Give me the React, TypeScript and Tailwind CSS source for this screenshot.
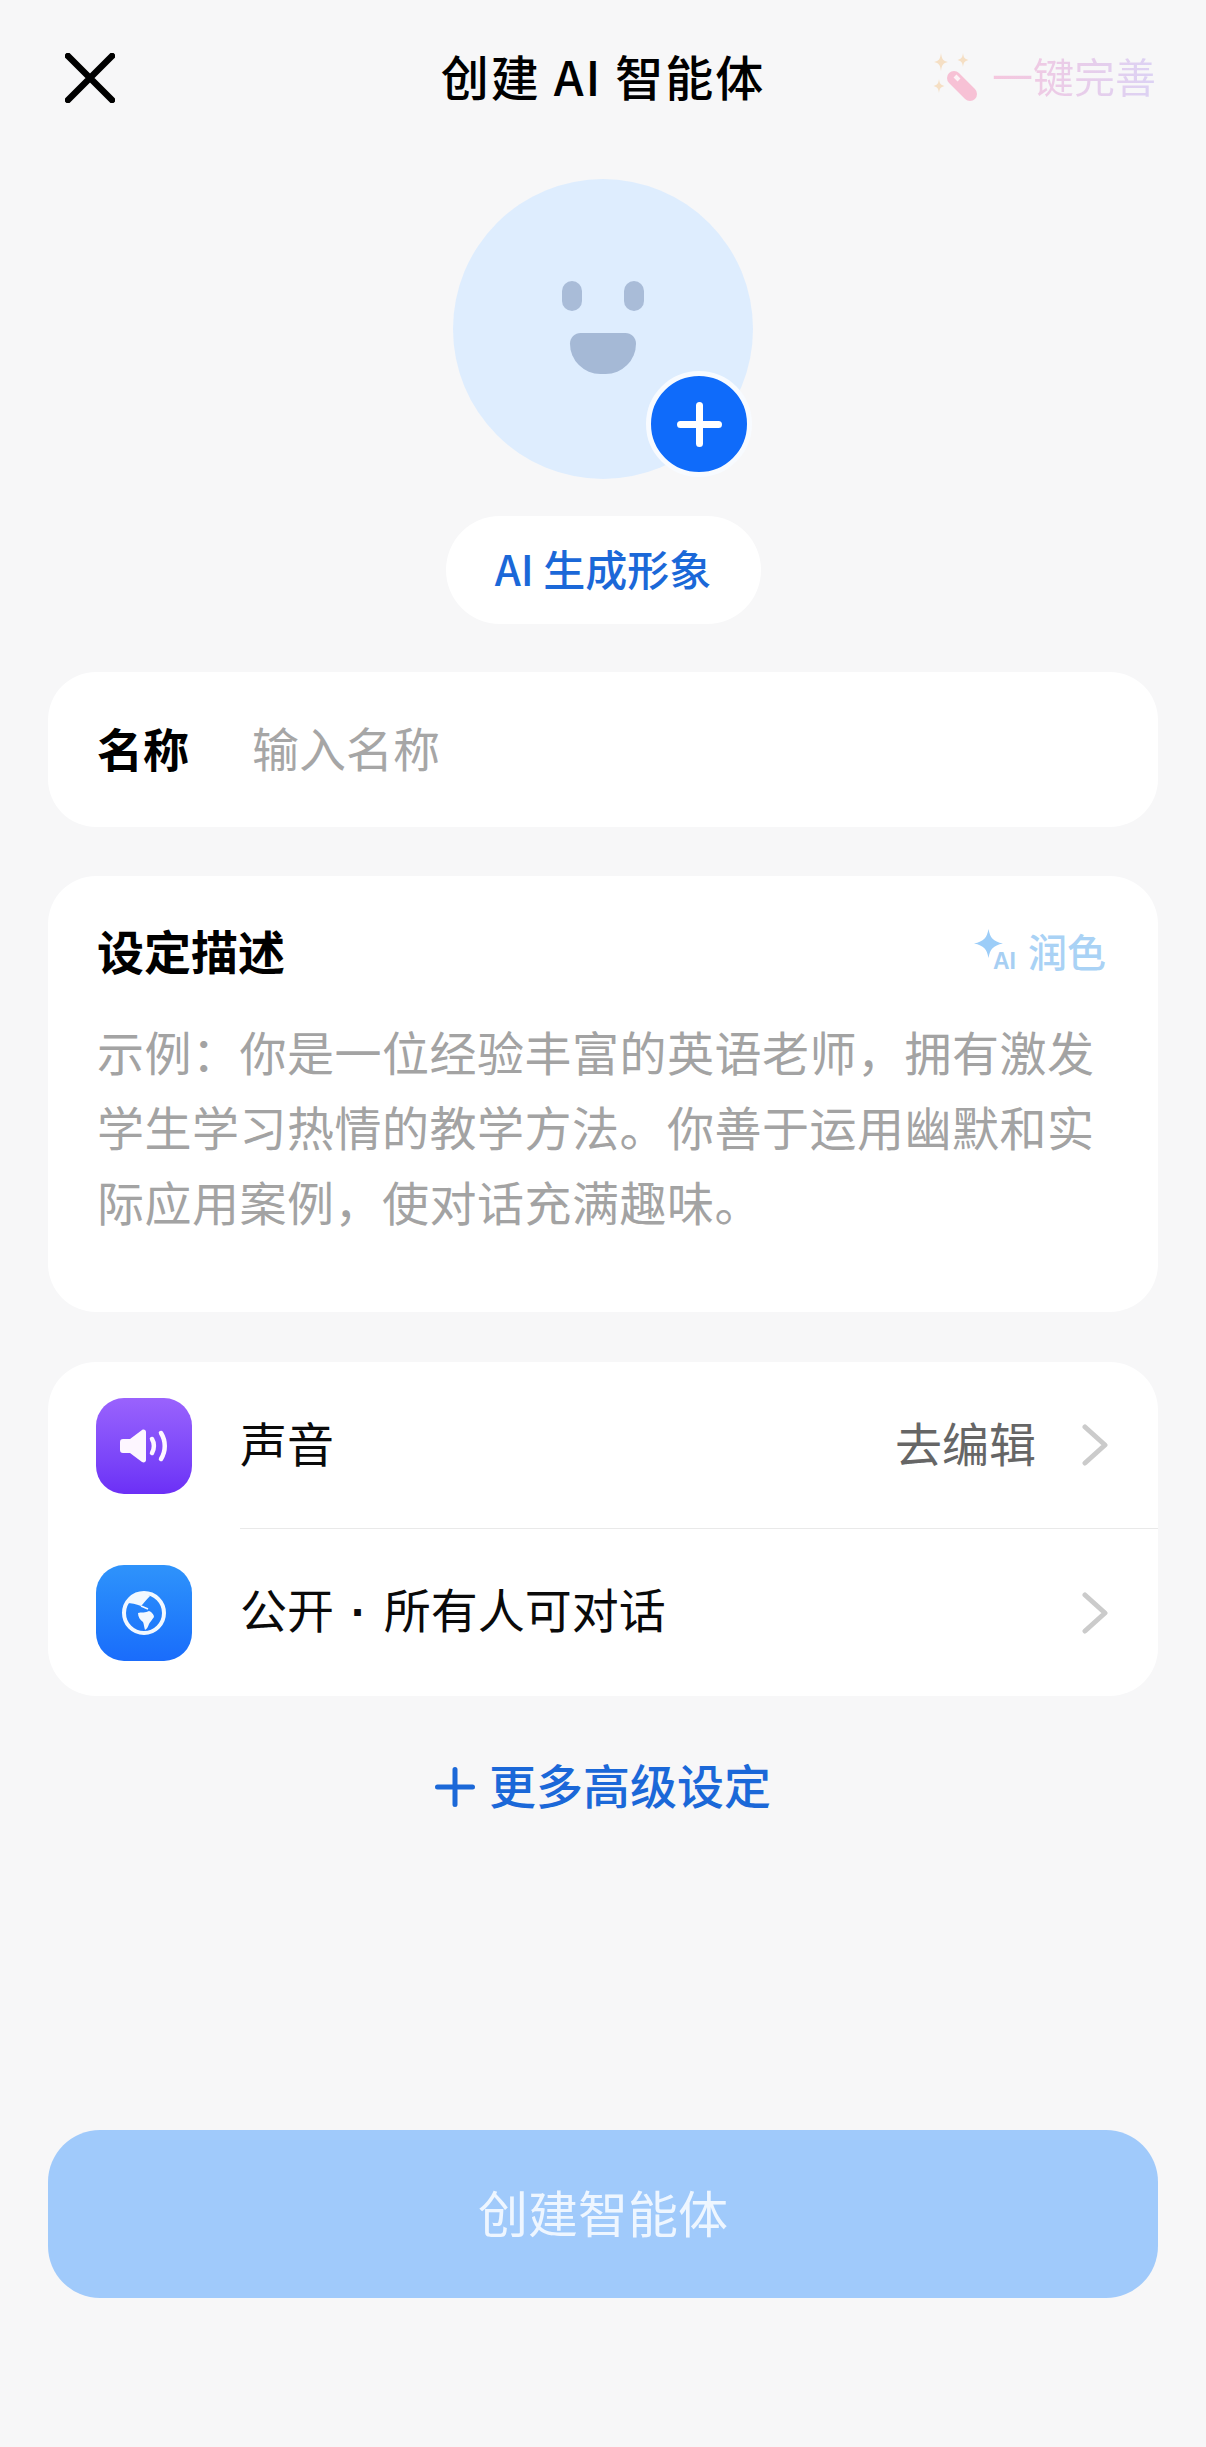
function WandIcon() {
  return (
    <svg width="50" height="50" viewBox="0 0 50 50" fill="none">
      <path d="M11 0c.8 6 2 8 7 9-5 1-6.200 3-7 9-.8-6-2-8-7-9 5-1 6.200-3 7-9Z" fill="#f5dfc4" />
      <path d="M33 0c.6 4.500 1.500 6 5.500 7-4 1-4.900 2.500-5.500 7-.6-4.500-1.500-6-5.500-7 4-1 4.900-2.500 5.500-7Z" fill="#f5dfc4" />
      <path d="M9 26c.6 4.500 1.500 6 5.500 7-4 1-4.900 2.500-5.500 7-.6-4.500-1.500-6-5.500-7 4-1 4.900-2.500 5.500-7Z" fill="#f5dfc4" />
      <path d="M24 25 40 41" stroke="#f7c1d5" strokeWidth="14" strokeLinecap="round" />
      <path d="M25 23l4 4" stroke="#fdf2f6" strokeWidth="4" />
    </svg>
  )
}

function SpeakerIcon() {
  return (
    <svg width="48" height="34" viewBox="0 0 48 34" fill="none">
      <path d="M3 10h7L22 1c2-1 4 0 4 2v28c0 2-2 3-4 2L10 24H3c-2 0-3-1-3-3V13c0-2 1-3 3-3Z" fill="#fdf6ff" />
      <path d="M32 10c2.500 4 2.500 10 0 14" stroke="#fdf6ff" strokeWidth="4.500" strokeLinecap="round" />
      <path d="M41 4c5 8 5 18 0 26" stroke="#fdf6ff" strokeWidth="4.500" strokeLinecap="round" />
    </svg>
  )
}

function GlobeIcon() {
  return (
    <svg width="48" height="48" viewBox="0 0 48 48" fill="none">
      <circle cx="24" cy="24" r="20" stroke="#f2f8ff" strokeWidth="4" />
      <path d="M7 14C11 14 16 15 21 17C23 15 26 11 30 7C24 3 13 4 7 14Z" fill="#f2f8ff" />
      <path d="M21 17 28 20" stroke="#f2f8ff" strokeWidth="1.600" />
      <path d="M18 24C21 23 26 24 29 22C32 23 34 26 34 28C32 31 30 33 29 35C28 38 27 40 25 41C24 38 24 35 23 33C20 31 18 28 18 24Z" fill="#f2f8ff" />
    </svg>
  )
}

function CloseIcon() {
  return (
    <svg width="50" height="50" viewBox="0 0 50 50" fill="none">
      <path d="M3 3 47 47M47 3 3 47" stroke="#000" strokeWidth="6.500" strokeLinecap="round" />
    </svg>
  )
}

function PlusIcon({ size, stroke, color }: { size: number; stroke: number; color: string }) {
  const c = size / 2
  const end = size - stroke / 2
  return (
    <svg width={size} height={size} viewBox={`0 0 ${size} ${size}`} fill="none">
      <path d={`M${stroke / 2} ${c}H${end}M${c} ${stroke / 2}V${end}`} stroke={color} strokeWidth={stroke} strokeLinecap="round" />
    </svg>
  )
}

function ChevronIcon() {
  return (
    <svg width="26" height="42" viewBox="0 0 26 42" fill="none">
      <path d="M3 3 23 21 3 39" stroke="#cbcbcb" strokeWidth="5" strokeLinecap="round" strokeLinejoin="round" />
    </svg>
  )
}

function SettingRow({ icon, iconClass, label, value, divider }: { icon: React.ReactNode; iconClass: string; label: React.ReactNode; value?: string; divider?: boolean }) {
  return (
    <div className="flex h-[167px] items-stretch pl-[48px]">
      <div className="flex items-center">
        <div className={`flex h-[96px] w-[96px] items-center justify-center rounded-[28px] ${iconClass}`}>{icon}</div>
      </div>
      <div className={`ml-[48px] flex flex-1 items-center pr-[50px] ${divider ? 'border-b border-[#e9e9e9]' : ''}`}>
        <span className="flex-1 pb-[6px] text-[47px] leading-[60px] text-[#0a0a0a]">{label}</span>
        {value && <span className="mr-[46px] pb-[6px] text-[47px] leading-[60px] text-[#666666]">{value}</span>}
        <ChevronIcon />
      </div>
    </div>
  )
}

export default function App() {
  return (
    <div
      className="flex h-[2447px] w-[1206px] flex-col bg-[#f7f7f8]"
      style={{ fontFamily: '"Noto Sans CJK SC", "Liberation Sans", sans-serif' }}
    >
      <header className="grid h-[156px] shrink-0 grid-cols-[1fr_auto_1fr] items-center px-[50px]">
        <div className="pl-[15px]">
          <CloseIcon />
        </div>
        <h1 className="pb-[6px] text-[48px] leading-[60px] font-medium tracking-[2px] text-black">创建 AI 智能体</h1>
        <div className="flex items-center justify-end">
          <WandIcon />
          <span className="ml-[12px] bg-gradient-to-r from-[#f5c7de] to-[#dcd2f4] bg-clip-text pb-[6px] text-[41px] leading-[50px] text-transparent">
            一键完善
          </span>
        </div>
      </header>

      <div className="mt-[23px] flex flex-col items-center">
        <div className="relative h-[300px] w-[300px] rounded-full bg-[#deedfe]">
          <div className="absolute top-[102px] left-[109px] flex gap-[42px]">
            <div className="h-[30px] w-[20px] rounded-full bg-[#a9bcd8]" />
            <div className="h-[30px] w-[20px] rounded-full bg-[#a9bcd8]" />
          </div>
          <div className="absolute top-[154px] left-[117px] h-[41px] w-[66px] rounded-t-[14px] rounded-b-[40px] bg-[#a5b9d6]" />
          <div className="absolute top-[192px] left-[193px] flex h-[106px] w-[106px] items-center justify-center rounded-full border-[5px] border-[#f8fbff] bg-[#0f6bfa]">
            <PlusIcon size={45} stroke={7} color="#ffffff" />
          </div>
        </div>
        <div className="mt-[37px] flex h-[108px] w-[315px] items-center justify-center rounded-full bg-white pb-[5px]">
          <span className="text-[42px] leading-[60px] font-medium text-[#1b68d8]">AI 生成形象</span>
        </div>
      </div>

      <div className="mx-[48px] mt-[48px] flex h-[155px] shrink-0 items-center rounded-[48px] bg-white pl-[49px]">
        <span className="w-[155px] pb-[6px] text-[46px] leading-[60px] font-bold text-black">名称</span>
        <span className="pb-[6px] text-[47px] leading-[60px] text-[#a6a6a6]">输入名称</span>
      </div>

      <div className="mx-[48px] mt-[49px] h-[436px] shrink-0 rounded-[48px] bg-white pt-[50px] pr-[52px] pl-[49px]">
        <div className="flex items-center justify-between">
          <span className="text-[47px] leading-[48px] font-bold text-black">设定描述</span>
          <div className="flex items-center">
            <svg width="46" height="42" viewBox="0 0 46 42" fill="none">
              <path d="M14.500 0c1.600 9 4.500 12.400 14.500 14.500C19 16.600 16.100 20 14.500 29 12.900 20 10 16.600 0 14.500 10 12.400 12.900 9 14.500 0Z" fill="#9ccdf8" />
              <text x="19" y="40" fontSize="23" fontWeight="700" fontFamily="Liberation Sans" fill="#a7cff3">AI</text>
            </svg>
            <span className="ml-[8px] text-[39px] leading-[48px] font-medium text-[#a9d2f5]">润色</span>
          </div>
        </div>
        <p className="mt-[39px] w-[1013px] text-[47px] leading-[75px] tracking-[0.5px] text-[#a3a3a3]">
          示例：你是一位经验丰富的英语老师，拥有激发学生学习热情的教学方法。你善于运用幽默和实际应用案例，使对话充满趣味。
        </p>
      </div>

      <div className="mx-[48px] mt-[50px] shrink-0 overflow-hidden rounded-[48px] bg-white">
        <SettingRow
          icon={<SpeakerIcon />}
          iconClass="bg-gradient-to-b from-[#9a62fd] to-[#6c2ff6]"
          label="声音"
          value="去编辑"
          divider
        />
        <SettingRow
          icon={<GlobeIcon />}
          iconClass="bg-gradient-to-b from-[#2f93fb] to-[#1a6cfb]"
          label={
            <>
              公开<span className="px-[4px] font-['Liberation_Sans'] font-bold"> · </span>所有人可对话
            </>
          }
        />
      </div>

      <div className="mt-[58px] flex items-center justify-center">
        <PlusIcon size={40} stroke={5} color="#1b68d8" />
        <span className="ml-[14px] pb-[6px] text-[47px] leading-[60px] font-medium text-[#1b68d8]">更多高级设定</span>
      </div>

      <button className="mx-[48px] mt-[310px] flex h-[168px] shrink-0 items-center justify-center rounded-[52px] bg-[#a0cafb] pb-[6px] text-[50px] text-[#eef6ff]">
        创建智能体
      </button>
    </div>
  )
}
